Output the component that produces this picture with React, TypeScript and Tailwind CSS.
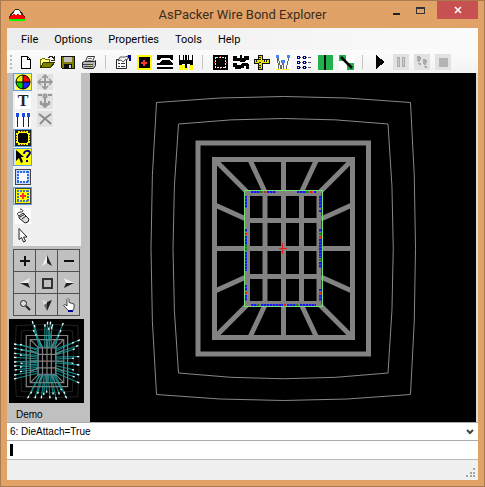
import type { ReactNode } from "react";

type ToolType = {
  label: string;
  icon: ReactNode;
  active?: boolean;
  disabled?: boolean;
};

function Icon({ children, size = 16 }: { children: ReactNode; size?: number }) {
  return (
    <svg width={size} height={size} viewBox="0 0 16 16" fill="none" shapeRendering="crispEdges" className="block shrink-0">
      {children}
    </svg>
  );
}

const fileTools: ToolType[] = [
  {
    label: "New",
    icon: (
      <Icon>
        <path d="M3.5 2.5h6l3 3v9h-9z" fill="#fff" stroke="#000" />
        <path d="M9.5 2.5v3h3" stroke="#000" />
      </Icon>
    )
  },
  {
    label: "Open",
    icon: (
      <Icon>
        <path d="M1.5 13.5v-8h1l1-1h2l1 1h4v3" fill="#ffff80" stroke="#6b6b00" />
        <path d="M1.5 13.5l3-5h11l-4 5z" fill="#808000" stroke="#333300" />
        <path d="M9 3h1v-1h3v1h1v1h1M15 2v4h-3" stroke="#222" />
      </Icon>
    )
  },
  {
    label: "Save",
    icon: (
      <Icon>
        <path d="M1.5 2.5h13v12h-12l-1-1z" fill="#808000" stroke="#111" />
        <path d="M4 3h8v5H4z" fill="#c0c0c0" />
        <path d="M4 10h8v4H4z" fill="#111" />
        <path d="M9 11h2v3H9z" fill="#d0d0d0" />
      </Icon>
    )
  },
  {
    label: "Print",
    icon: (
      <svg width="16" height="16" viewBox="0 0 16 16" fill="none" className="block shrink-0">
        <path d="M4.500 7.500l2-5h7l-2 5z" fill="#fff" stroke="#333" />
        <path d="M7 4.500h4M6.500 6.500h4" stroke="#777" />
        <path d="M1.500 8.500l2-1h10l1-1v5l-2 3h-9l-2-1z" fill="#b8b8b8" stroke="#222" />
        <path d="M2 10.500h10M3 12.500h9" stroke="#444" />
        <path d="M8 11h3v1H8z" fill="#e8e000" />
      </svg>
    )
  }
];

const viewTools: ToolType[] = [
  {
    label: "Properties",
    icon: (
      <svg width="16" height="16" viewBox="0 0 16 16" fill="none" className="block shrink-0">
        <path d="M1.500 5.500h10v9h-10z" fill="#fff" stroke="#222" />
        <path d="M3 9.500h2M6 9.500h4M3 12.500h2M6 12.500h4" stroke="#333" />
        <path d="M3 7l2-4h5l3-1v3l-3 1-2 2-2-2z" fill="#f4f4f4" stroke="#333" strokeWidth="0.800" />
        <path d="M13 1h3v6h-2V4h-1z" fill="#000080" />
      </svg>
    )
  },
  {
    label: "Die",
    icon: (
      <Icon>
        <path d="M1 1h15v15H1z" fill="#ff0" />
        <path d="M3 3h11v11H3z" fill="#000" />
        <path d="M7 6h2v2h2v2H9v2H7v-2H5V8h2z" fill="#f33" />
      </Icon>
    )
  },
  {
    label: "Profile",
    icon: (
      <Icon>
        <path d="M0 1h16v15H0z" fill="#fff" />
        <path d="M0 1h16v5h-1l-3-2H5L2 6H0z" fill="#000" />
        <path d="M0 9h2l3-3h7l3 3h1v2H0z" fill="#000" />
        <path d="M0 13h16v2H0z" fill="#000" />
      </Icon>
    )
  },
  {
    label: "Bond fingers",
    icon: (
      <Icon>
        <path d="M0 1h16v15H0z" fill="#fff" />
        <path d="M1 11h4v5H1zM6 11h4v5H6zM11 11h4v5h-4z" fill="#ff0" />
        <path d="M1 1h1v5h2v5H1zM5 1h1v5H5zM7 1h2v13H7zM10 1h1v5h-1zM14 1h1v10h-3V6h2z" fill="#000" />
        <path d="M4 6h3v4H4zM9 6h3v4H9z" fill="#000" />
      </Icon>
    )
  }
];

const designTools: ToolType[] = [
  {
    label: "Package",
    icon: (
      <Icon>
        <path d="M1 1h15v15H1z" fill="#000" />
        <path d="M3.500 3.500h10v10h-10z" stroke="#d8eeee" strokeDasharray="2 1" />
        <path d="M5 5h7v7H5z" fill="#000" />
        <path d="M8 2h1v1H8zM2 8h1v1H2zM14 8h1v1h-1zM8 14h1v1H8z" fill="#f22" />
      </Icon>
    )
  },
  {
    label: "Rotate package",
    icon: (
      <Icon>
        <path d="M0 1h16v15H0z" fill="#fff" />
        <path d="M0 2h4v2h3V1h2v3h2V2h5v4h-3l-1 2H8L6 7H0z" fill="#000" />
        <path d="M0 9h4v2h3l3-2h4l2 1v5h-3v-3h-2v2H8l-1 1H2v-2H0z" fill="#000" />
      </Icon>
    )
  },
  {
    label: "Measure",
    icon: (
      <Icon>
        <path d="M4.500 1.500h4v4h7v4h-7v6h-4v-6h-4v-4h4z" fill="#e8e000" stroke="#111" />
        <path d="M2.500 6v2M5 3.500h2M5 5.500h2M5 8.500h2M5 11.500h2M5 13.500h2M10.500 6v2M12.500 6v2" stroke="#222" />
      </Icon>
    )
  },
  {
    label: "Wires",
    icon: (
      <Icon>
        <path d="M0 1h16v15H0z" fill="#fff" />
        <path d="M3 3l3 12M8 8v7M14 3l-3 12M2 3l2 12M7.500 8l-1 7" stroke="#666" />
        <path d="M1 1h3v3H1zM12 1h3v3h-3zM6 6h4v3H6z" fill="#4484ff" />
        <path d="M1 15h4v1H1zM6 15h4v1H6zM11 15h4v1h-4z" fill="#ff0" />
      </Icon>
    )
  },
  {
    label: "Net list",
    icon: (
      <Icon>
        <path d="M1 3.500h14M1 8.500h14M1 13.500h14" stroke="#557" />
        {[2, 7, 12].map((y) => (
          <path key={y} d={`M1 ${y}h3v3H1zM7 ${y}h3v3H7z`} fill="#000090" />
        ))}
        <path d="M2 3h1v1H2zM8 3h1v1H8zM2 8h1v1H2zM8 8h1v1H8zM2 13h1v1H2zM8 13h1v1H8zM5 3h1v11H5zM11 3h1v11h-1z" fill="#fff" />
      </Icon>
    )
  },
  {
    label: "Align",
    icon: (
      <Icon>
        <path d="M1 1h15v15H1z" fill="#22b14c" />
        <path d="M7 1h2v15H7z" fill="#111" />
      </Icon>
    )
  },
  {
    label: "Cross",
    icon: (
      <svg width="16" height="16" viewBox="0 0 16 16" className="block shrink-0">
        <path d="M1 1h15v15H1z" fill="#fff" />
        <path d="M1 1h7v6H1zM9 9h7v7H9z" fill="#22b14c" />
        <path d="M3 3l11 11" stroke="#000" strokeWidth="2.500" />
      </svg>
    )
  }
];

const runTools: ToolType[] = [
  {
    label: "Run",
    icon: (
      <Icon>
        <path d="M4 1l9 7-9 7z" fill="#000" />
      </Icon>
    )
  },
  {
    label: "Pause",
    disabled: true,
    icon: (
      <Icon>
        <path d="M0 0h16v16H0z" fill="#e2e2e2" />
        <path d="M4.500 3.500h2v9h-2zM9.500 3.500h2v9h-2z" fill="#ccc" stroke="#aaa" />
      </Icon>
    )
  },
  {
    label: "Step",
    disabled: true,
    icon: (
      <Icon>
        <path d="M0 0h16v16H0z" fill="#e2e2e2" />
        <path d="M3 2h3l1 2-1 4H4L3 5zM4 9h3v2H5zM9 5h3l1 2-1 4h-2L9 8zM10 12h3v2h-2z" fill="#aaa" />
      </Icon>
    )
  },
  {
    label: "Stop",
    disabled: true,
    icon: (
      <Icon>
        <path d="M0 0h16v16H0z" fill="#e2e2e2" />
        <path d="M4 4h9v9H4z" fill="#b4b4b4" />
      </Icon>
    )
  }
];

const editTools: ToolType[] = [
  {
    label: "Colours",
    active: true,
    icon: (
      <svg width="16" height="16" viewBox="0 0 16 16">
        <path d="M0 0h16v16H0z" fill="#ffff50" />
        <path d="M8 8V1a7 7 0 0 1 7 7z" fill="#f00" />
        <path d="M8 8h7a7 7 0 0 1-7 7z" fill="#22f" />
        <path d="M8 8v7a7 7 0 0 1-7-7z" fill="#0c0" />
        <path d="M8 8H1a7 7 0 0 1 7-7z" fill="#ee0" />
        <path d="M8 1v14M1 8h14" stroke="#000" />
        <circle cx="8" cy="8" r="7" fill="none" stroke="#000" />
      </svg>
    )
  },
  {
    label: "Text",
    icon: (
      <svg width="16" height="16" viewBox="0 0 16 16">
        <path d="M0 0h16v16H0z" fill="#fff" />
        <text x="8" y="13" textAnchor="middle" fontFamily="Liberation Serif, serif" fontSize="16" fontWeight="700" fill="#222">T</text>
      </svg>
    )
  },
  {
    label: "Wire group",
    icon: (
      <Icon>
        <path d="M0 0h16v16H0z" fill="#fff" />
        <path d="M2.500 4v11M8 4v11M13.500 4v11" stroke="#222" />
        <path d="M1 1h3v4H1zM7 1h3v4H7zM12 1h3v4h-3z" fill="#1a4be0" />
      </Icon>
    )
  },
  {
    label: "Show package",
    active: true,
    icon: (
      <Icon>
        <path d="M.5.500h15v15H.5z" fill="#ff0" stroke="#222" />
        <path d="M4 3h8v1h1v8h-1v1H4v-1H3V4h1z" fill="#000" />
        <path d="M1 1h2v2H1zM13 1h2v2h-2zM1 13h2v2H1zM13 13h2v2h-2z" fill="#222" />
        <path d="M5 1h1v1H5zM10 1h1v1h-1zM5 14h1v1H5zM10 14h1v1h-1zM1 5h1v1H1zM1 10h1v1H1zM14 5h1v1h-1zM14 10h1v1h-1z" fill="#222" />
        <path d="M7 1h2v1H7zM7 14h2v1H7zM1 7h1v2H1zM14 7h1v2h-1z" fill="#c60" />
      </Icon>
    )
  },
  {
    label: "What is this",
    active: true,
    icon: (
      <svg width="16" height="16" viewBox="0 0 16 16" fill="none">
        <path d="M0 0h16v16H0z" fill="#ff0" />
        <path d="M1 1l8 7H6l2 5-2 1-2-5-3 3z" fill="#000" />
        <path d="M9 5c0-4 6-4 6-1 0 2-3 2-3 5M12 11v2" stroke="#000080" strokeWidth="2" />
      </svg>
    )
  }
];

const dieTools: ToolType[] = [
  {
    label: "Show die pads",
    icon: (
      <Icon>
        <path d="M.5.500h15v15H.5z" fill="#c8dcff" stroke="#444" />
        <path d="M4 4h8v8H4z" fill="#fff" />
        <path d="M2 3h12M2 13h12M3 2v12M13 2v12" stroke="#3568e8" strokeWidth="2" strokeDasharray="2 1" />
      </Icon>
    )
  },
  {
    label: "Die attach",
    active: true,
    icon: (
      <Icon>
        <path d="M.5.500h15v15H.5z" fill="#ff0" stroke="#444" />
        <path d="M2 3h12M2 13h12M3 2v12M13 2v12" stroke="#4878a8" strokeWidth="2" strokeDasharray="2 1" />
        <path d="M7 5h2v2h2v2H9v2H7V9H5V7h2z" fill="#f33" />
      </Icon>
    )
  },
  {
    label: "Probe",
    icon: (
      <svg width="16" height="16" viewBox="0 0 16 16" fill="#fff" stroke="#222">
        <path d="M0 0h16v16H0z" stroke="none" />
        <path d="M4 8l4-3 6 6-1 3-3 1-6-5z" fill="#ddd" />
        <path d="M5 9l5-3M4 8c-3-2-1-4 2-4S8 1 5 1M7 11l4-3" fill="none" />
      </svg>
    )
  },
  {
    label: "Select",
    icon: (
      <svg width="16" height="16" viewBox="0 0 16 16">
        <path d="M4 1.500v11l2.500-2 2 4.500 2-1-2-4h3.500z" fill="#fff" stroke="#222" />
      </svg>
    )
  }
];

const moveTools: ToolType[] = [
  {
    label: "Move",
    disabled: true,
    icon: (
      <svg width="16" height="16" viewBox="0 0 16 16" fill="none" stroke="#999" strokeWidth="2">
        <path d="M0 0h16v16H0z" fill="#e2e2e2" stroke="none" />
        <path d="M8 2v12M2 8h12" />
        <path d="M5 4l3-3 3 3M5 12l3 3 3-3M4 5L1 8l3 3M12 5l3 3-3 3" strokeWidth="1.500" />
      </svg>
    )
  },
  {
    label: "Anchor",
    disabled: true,
    icon: (
      <svg width="16" height="16" viewBox="0 0 16 16" fill="none" stroke="#999" strokeWidth="2">
        <path d="M0 0h16v16H0z" fill="#e2e2e2" stroke="none" />
        <path d="M8 4v9M1 2h4M11 2h4M3 9l5 5 5-5" />
        <path d="M4 8v3h3M12 8v3H9" />
        <circle cx="8" cy="3" r="1.500" />
      </svg>
    )
  },
  {
    label: "Delete",
    disabled: true,
    icon: (
      <svg width="16" height="16" viewBox="0 0 16 16" fill="none" stroke="#888" strokeWidth="2">
        <path d="M0 0h16v16H0z" fill="#e2e2e2" stroke="none" />
        <path d="M2 3c4 3 8 6 12 10M14 3C9 6 6 9 3 13" />
      </svg>
    )
  }
];

const padKeys: ToolType[] = [
  { label: "Zoom in", icon: <Icon><path d="M8 3v10M3 8h10" stroke="#111" strokeWidth="2" /></Icon> },
  {
    label: "Pan up",
    icon: (
      <svg width="16" height="16" viewBox="0 0 16 16">
        <path d="M8 2L3 13l5-3z" fill="#eee" />
        <path d="M8 2l5 11-5-3z" fill="#222" />
      </svg>
    )
  },
  { label: "Zoom out", icon: <Icon><path d="M3 8h10" stroke="#111" strokeWidth="2" /></Icon> },
  {
    label: "Pan left",
    icon: (
      <svg width="16" height="16" viewBox="0 0 16 16">
        <path d="M3 8l10-5-2 5z" fill="#eee" />
        <path d="M3 8l10 5-2-5z" fill="#222" />
      </svg>
    )
  },
  { label: "Fit", icon: <Icon><path d="M4 4h9v9H4z" stroke="#333" strokeWidth="2" /></Icon> },
  {
    label: "Pan right",
    icon: (
      <svg width="16" height="16" viewBox="0 0 16 16">
        <path d="M13 8L3 3l2 5z" fill="#eee" />
        <path d="M13 8L3 13l2-5z" fill="#222" />
      </svg>
    )
  },
  {
    label: "Zoom window",
    icon: (
      <svg width="16" height="16" viewBox="0 0 16 16" fill="none" stroke="#222">
        <circle cx="6.500" cy="6.500" r="3" fill="#ddd" />
        <path d="M9 9l4 4" strokeWidth="2" />
      </svg>
    )
  },
  {
    label: "Pan down",
    icon: (
      <svg width="16" height="16" viewBox="0 0 16 16">
        <path d="M8 14L3 3l5 2z" fill="#ddd" />
        <path d="M8 14l5-11-5 2z" fill="#222" />
        <path d="M8 14L5 8l3-2z" fill="#666" />
      </svg>
    )
  },
  {
    label: "Grab",
    icon: (
      <svg width="16" height="16" viewBox="0 0 16 16">
        <path d="M6 12L2.500 8.500 4 7.500 6 9V2.500l1-1 1 1v3l5 1.500v4l-1 2.500H7z" fill="#fff" stroke="#222" strokeWidth="0.800" />
        <path d="M7 13h5v2H7z" fill="#0000a0" />
      </svg>
    )
  }
];

const menus = ["File", "Options", "Properties", "Tools", "Help"];

// pad runs along the die edge: start, end, colour
const BLUE = "#1414f5";
const GREEN = "#0a870a";
const RED = "#f51414";
type Run = [number, number, string];

const topPads: Run[] = [
  [251, 260, BLUE], [260, 263, GREEN], [264, 266, RED], [267, 276, BLUE],
  [297, 306, BLUE], [306, 309, GREEN], [310, 313, RED], [314, 316, BLUE]
];
const bottomPads: Run[] = [
  [251, 257, BLUE], [257, 260, GREEN], [261, 283, BLUE], [284, 286, RED],
  [287, 296, BLUE], [296, 299, GREEN], [300, 316, BLUE]
];
const leftPads: Run[] = [
  [196, 208, BLUE], [229, 232, BLUE], [233, 235, RED], [236, 245, BLUE], [245, 251, GREEN],
  [252, 271, BLUE], [285, 291, BLUE], [292, 294, RED], [295, 301, BLUE]
];
const rightPads: Run[] = [
  [196, 208, BLUE], [210, 212, BLUE], [229, 232, BLUE], [233, 235, GREEN], [236, 239, RED],
  [239, 258, BLUE], [259, 261, GREEN], [262, 268, BLUE], [289, 291, BLUE], [292, 295, RED],
  [295, 301, BLUE]
];

function Package() {
  return (
    <g fill="none">
      <g stroke="#888">
        <path d="M156.500 102.500Q283.500 90.500 410.500 102.500Q420.500 248 410.500 394.500Q283.500 406.500 156.500 394.500Q145.500 248 156.500 102.500z" />
        <path d="M178.500 124Q283.500 113 388 124Q398.500 248 388 373Q283.500 384.500 178.500 373Q167.500 248 178.500 124z" />
      </g>
      <g stroke="#828282" strokeWidth="5">
        <path d="M198 143h170.500v211H198z" />
        <path d="M214.500 159.500h138v178h-138z" />
        <path d="M247.500 193.500h71.500v110h-71.500z" />
        <path d="M265 192v113M283.500 160v178M301.500 192v113" />
        <path d="M246 220.500h75M215 248.500h137M246 276.500h75" />
        <path d="M215 160l32 32M250 160l15 32M316.500 160l-15 32M352 160l-32 32" />
        <path d="M215 337l32-32M250 337l15-32M316.500 337l-15-32M352 337l-32-32" />
        <path d="M215 205l31 14M352 205l-31 14M215 291l31-14M352 291l-31-14" />
      </g>
      {topPads.map(([a, b, c]) => (
        <path key={a} d={`M${a} 192H${b}`} stroke={c} strokeWidth="2" strokeDasharray="2.500 0.500" />
      ))}
      {bottomPads.map(([a, b, c]) => (
        <path key={a} d={`M${a} 305H${b}`} stroke={c} strokeWidth="2" strokeDasharray="2.500 0.500" />
      ))}
      {leftPads.map(([a, b, c]) => (
        <path key={a} d={`M246 ${a}V${b}`} stroke={c} strokeWidth="2" strokeDasharray="2.500 0.500" />
      ))}
      {rightPads.map(([a, b, c]) => (
        <path key={a} d={`M320.500 ${a}V${b}`} stroke={c} strokeWidth="3" strokeDasharray="2.500 0.500" />
      ))}
      <path d="M244.500 190.500h78v116h-78z" stroke="#78e078" />
      <path d="M279 248.500h8M282.500 243v11" stroke="#e02020" />
    </g>
  );
}

// bond wires of the overview: die end x, y, finger end x, y
const wires = [
  [118, 98, 97, 18], [122, 98, 103, 30], [125, 98, 100, 45], [129, 98, 107, 58], [134, 98, 135, 28],
  [138, 98, 143, 20], [142, 98, 152, 20], [146, 98, 158, 28], [150, 98, 146, 38], [154, 98, 155, 35],
  [158, 98, 190, 24], [162, 98, 183, 46], [165, 98, 176, 60],
  [116, 102, 42, 87], [116, 107, 60, 88], [116, 112, 42, 100], [116, 117, 62, 104], [116, 122, 42, 115],
  [116, 127, 60, 120], [116, 132, 42, 127], [116, 137, 42, 141], [116, 142, 62, 145], [116, 147, 42, 153],
  [116, 152, 60, 156], [116, 157, 44, 165], [116, 162, 60, 170], [116, 168, 42, 180], [116, 174, 42, 192],
  [168, 102, 240, 75], [168, 108, 222, 82], [168, 114, 235, 92], [168, 120, 224, 102], [168, 126, 238, 125],
  [168, 132, 222, 130], [168, 138, 220, 145], [168, 144, 238, 150], [168, 152, 222, 165],
  [168, 160, 238, 180], [168, 166, 224, 186], [168, 174, 238, 204],
  [118, 180, 83, 250], [121, 180, 92, 236], [125, 180, 105, 250], [129, 180, 113, 236], [133, 180, 124, 250],
  [137, 180, 131, 240], [141, 180, 140, 233], [145, 180, 150, 250], [149, 180, 160, 238],
  [153, 180, 169, 254], [157, 180, 178, 238], [160, 180, 185, 226], [163, 180, 200, 250], [166, 180, 195, 236]
];

function Overview() {
  return (
    <svg viewBox="127 75 309 346" className="block h-[84px] w-full bg-black" aria-label="Overview">
      <g transform="translate(127 75) scale(1.372) translate(-27 -12)" strokeWidth="3">
        {wires.map(([x1, y1, x2, y2]) => (
          <path key={`${x2}-${y2}`} d={`M${x1} ${y1}L${x2} ${y2}`} stroke="#0e8080" />
        ))}
      </g>
      <Package />
      <g transform="translate(127 75) scale(1.372) translate(-27 -12)" strokeWidth="2">
        {wires.map(([x1, y1, x2, y2]) => (
          <g key={`${x2}-${y2}`}>
            <path d={`M${x1} ${y1}L${x2} ${y2}`} stroke="#0e9c9c" opacity="0.5" />
            <path
              d={`M${x2 + (x1 - x2) * 0.1} ${y2 + (y1 - y2) * 0.1}L${x2} ${y2}`}
              stroke="#f0f8f8"
              strokeWidth="4"
            />
          </g>
        ))}
      </g>
    </svg>
  );
}

function ToolGroup({ tools }: { tools: ToolType[] }) {
  return (
    <div className="flex items-center">
      {tools.map((tool) => (
        <button key={tool.label} aria-label={tool.label} disabled={tool.disabled} className="flex w-[21px] justify-center">
          {tool.icon}
        </button>
      ))}
    </div>
  );
}

function SideGroup({ tools }: { tools: ToolType[] }) {
  return (
    <>
      {tools.map((tool) => (
        <button
          key={tool.label}
          aria-label={tool.label}
          disabled={tool.disabled}
          className={
            tool.active
              ? "flex h-[18px] w-[19px] items-center justify-center bg-[#cfe3f8] outline outline-1 -outline-offset-1 outline-[#5f9fe0]"
              : "flex h-[18px] w-[19px] items-center justify-center"
          }
        >
          {tool.icon}
        </button>
      ))}
    </>
  );
}

function Separator() {
  return (
    <div className="flex w-[13px] justify-center">
      <div className="h-[14px] w-px bg-[#c4c4c4]" />
    </div>
  );
}

export default function App() {
  return (
    <div className="flex h-screen flex-col border border-[#a97b4e] bg-[#e1a267] px-1.5 pb-1.5 font-['Roboto',sans-serif] text-black">
      <header className="relative flex h-[27px] shrink-0 items-center justify-center">
        <svg width="16" height="16" viewBox="0 0 16 16" shapeRendering="crispEdges" className="absolute left-0.5 top-1.5">
          <path d="M7 2h2l7 8v2H0v-2z" fill="#f00" />
          <path d="M7 2h2l4 5-2 1-2-1-2 1-2-1-2 1z" fill="#fff" />
          <path d="M0 10L7 2h2l7 8" fill="none" stroke="#222" />
          <path d="M0 12h16v2H0z" fill="#0f0" />
        </svg>
        <h1 className="text-[13px] leading-5 text-[#3a2c20]">AsPacker Wire Bond Explorer</h1>
        <div className="absolute -right-1 top-0 flex h-[18px]">
          <button aria-label="Minimize" className="flex w-6 items-center justify-center">
            <svg width="10" height="12" viewBox="0 0 10 12"><path d="M1 9h7v2H1z" fill="#222" /></svg>
          </button>
          <button aria-label="Maximize" className="flex w-6 items-center justify-center">
            <svg width="10" height="12" viewBox="0 0 10 12" fill="none" stroke="#333" shapeRendering="crispEdges">
              <path d="M.5 3.500h8v6h-8zM.5 4h8" />
            </svg>
          </button>
          <button aria-label="Close" className="mr-1 ml-1 flex w-[41px] items-center justify-center bg-[#c75050]">
            <svg width="8" height="8" viewBox="0 0 8 8" stroke="#fff" strokeWidth="1.500"><path d="M1 1l6 6M7 1L1 7" /></svg>
          </button>
        </div>
      </header>

      <main className="flex min-h-0 flex-1 flex-col bg-[#f0f0f0]">
        <nav className="flex h-[22px] shrink-0 items-center gap-4 bg-linear-to-r from-[#ececec] to-[#fbfbfb] pt-px pl-[14px] text-[11px] leading-4">
          {menus.map((menu) => (
            <button key={menu}>{menu}</button>
          ))}
        </nav>

        <div className="flex h-[23px] shrink-0 items-center bg-linear-to-b from-[#fcfcfc] to-[#f2f2f2]">
          <div className="flex w-2 justify-center">
            <div className="h-[14px] border-l-2 border-dotted border-[#bbb]" />
          </div>
          <ToolGroup tools={fileTools} />
          <Separator />
          <ToolGroup tools={viewTools} />
          <Separator />
          <ToolGroup tools={designTools} />
          <Separator />
          <ToolGroup tools={runTools} />
        </div>

        <div className="flex min-h-0 flex-1">
          <aside className="flex w-[83px] shrink-0 flex-col bg-[#c0c0c0]">
            <div className="ml-[6px] flex h-[173px] w-[68px] shrink-0 gap-[3px] bg-[#f0f0f0]">
              <div className="flex flex-col gap-0.5">
                <div className="flex h-[93px] flex-col justify-between">
                  <SideGroup tools={editTools} />
                </div>
                <div className="flex h-[76px] flex-col justify-between">
                  <SideGroup tools={dieTools} />
                </div>
              </div>
              <div className="flex h-[55px] flex-col justify-between">
                <SideGroup tools={moveTools} />
              </div>
            </div>
            <div className="mt-[3px] ml-[6px] grid w-[67px] shrink-0 grid-cols-3 gap-px bg-[#505050] p-px">
              {padKeys.map((key) => (
                <button key={key.label} aria-label={key.label} className="flex h-[21px] items-center justify-center bg-[#c0c0c0]">
                  {key.icon}
                </button>
              ))}
            </div>
            <div className="mt-[3px] ml-0.5 w-[75px]">
              <Overview />
            </div>
            <p className="mt-1.5 pl-[9px] font-['Liberation_Sans',Arial,sans-serif] text-[10px] leading-3">Demo</p>
          </aside>
          <div className="min-w-0 flex-1 border-r-2 border-[#ddd] bg-black">
            <svg viewBox="90 73 386 349" className="block h-full w-full" aria-label="Package drawing">
              <Package />
            </svg>
          </div>
        </div>

        <div className="relative h-[19px] shrink-0 border-y border-[#aaaab0] bg-white font-['Liberation_Sans',Arial,sans-serif] text-[10px]">
          <select aria-label="Message" className="block h-full w-full appearance-none bg-white pl-[3px] leading-4 outline-none">
            <option>6: DieAttach=True</option>
          </select>
          <svg width="8" height="8" viewBox="0 0 8 8" fill="none" stroke="#444" strokeWidth="2" className="pointer-events-none absolute right-1 top-[5px]">
            <path d="M1 2l3 3 3-3" />
          </svg>
        </div>
        <div className="relative h-[19px] shrink-0 border-b border-[#b8b8b8] bg-white">
          <input aria-label="Command" className="block h-full w-full bg-white pl-2 font-['Liberation_Sans',Arial,sans-serif] text-[10px] outline-none" />
          <span className="absolute left-[3px] top-[3px] h-3 w-[3px] bg-black" />
        </div>
        <footer className="flex h-5 shrink-0 items-end justify-end p-0.5">
          <svg width="10" height="10" viewBox="0 0 10 10" fill="#a5a5a5">
            <path d="M7 0h2v2H7zM7 4h2v2H7zM7 7h2v2H7zM4 4h2v2H4zM4 7h2v2H4zM0 7h2v2H0z" />
          </svg>
        </footer>
      </main>
    </div>
  );
}
